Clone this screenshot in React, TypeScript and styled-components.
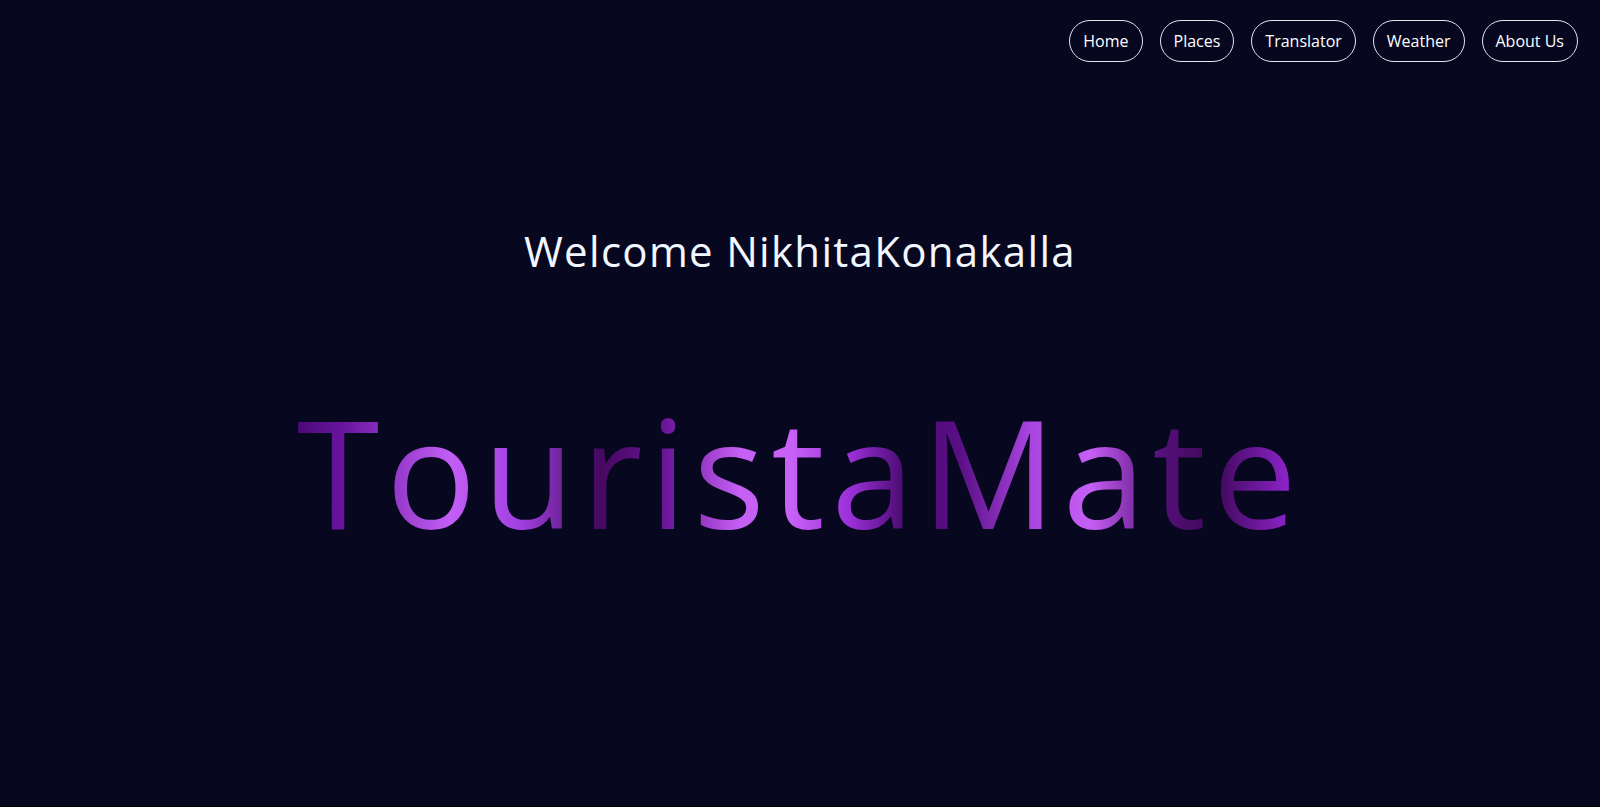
import React from "react";
import styled, { createGlobalStyle } from "styled-components";

const GlobalStyle = createGlobalStyle`
  html, body {
    margin: 0;
    padding: 0;
    background: #000000;
  }
  body {
    font-family: "Open Sans", "Liberation Sans", sans-serif;
  }
`;

const Page = styled.div`
  min-height: 806px;
  background: #070720;
  display: flex;
  flex-direction: column;
`;

const Nav = styled.nav`
  display: flex;
  justify-content: flex-end;
  gap: 17px;
  padding: 20px 22px 0 0;
`;

const NavButton = styled.a`
  display: flex;
  align-items: center;
  justify-content: center;
  box-sizing: border-box;
  height: 42px;
  padding: 0 13px;
  border: 1px solid #e4e4ec;
  border-radius: 21px;
  color: #ffffff;
  font-family: "Open Sans", "Liberation Sans", sans-serif;
  font-size: 16px;
  text-decoration: none;
  cursor: pointer;
`;

const Welcome = styled.h2`
  margin: 160px 0 0 0;
  text-align: center;
  color: #f2f6ff;
  font-family: "Open Sans", "Liberation Sans", sans-serif;
  font-weight: 400;
  font-size: 42px;
  letter-spacing: 1.3px;
  line-height: normal;
`;

const Title = styled.h1`
  margin: 90px 0 0 0;
  text-align: center;
  font-family: "Open Sans", "Liberation Sans", sans-serif;
  font-weight: 400;
  font-size: 150px;
  letter-spacing: 6.5px;
  line-height: normal;
  color: transparent;
  background: linear-gradient(
    to right,
    #4a0a78 0px,
    #4c0a7a 300px,
    #6a16a0 345px,
    #c35ef5 450px,
    #a040e0 520px,
    #45085f 600px,
    #6a1598 665px,
    #c660f5 740px,
    #c862f7 790px,
    #9a30d8 850px,
    #4a0a70 905px,
    #5a0f85 960px,
    #a845e0 1030px,
    #c65ff5 1090px,
    #55107a 1160px,
    #3e0858 1215px,
    #8e24cc 1290px,
    #8e24cc 1600px
  );
  -webkit-background-clip: text;
  background-clip: text;
`;

const links = ["Home", "Places", "Translator", "Weather", "About Us"];

export default function App() {
  return (
    <>
      <GlobalStyle />
      <Page>
        <Nav>
          {links.map((l) => (
            <NavButton key={l}>{l}</NavButton>
          ))}
        </Nav>
        <Welcome>Welcome NikhitaKonakalla</Welcome>
        <Title>TouristaMate</Title>
      </Page>
    </>
  );
}
